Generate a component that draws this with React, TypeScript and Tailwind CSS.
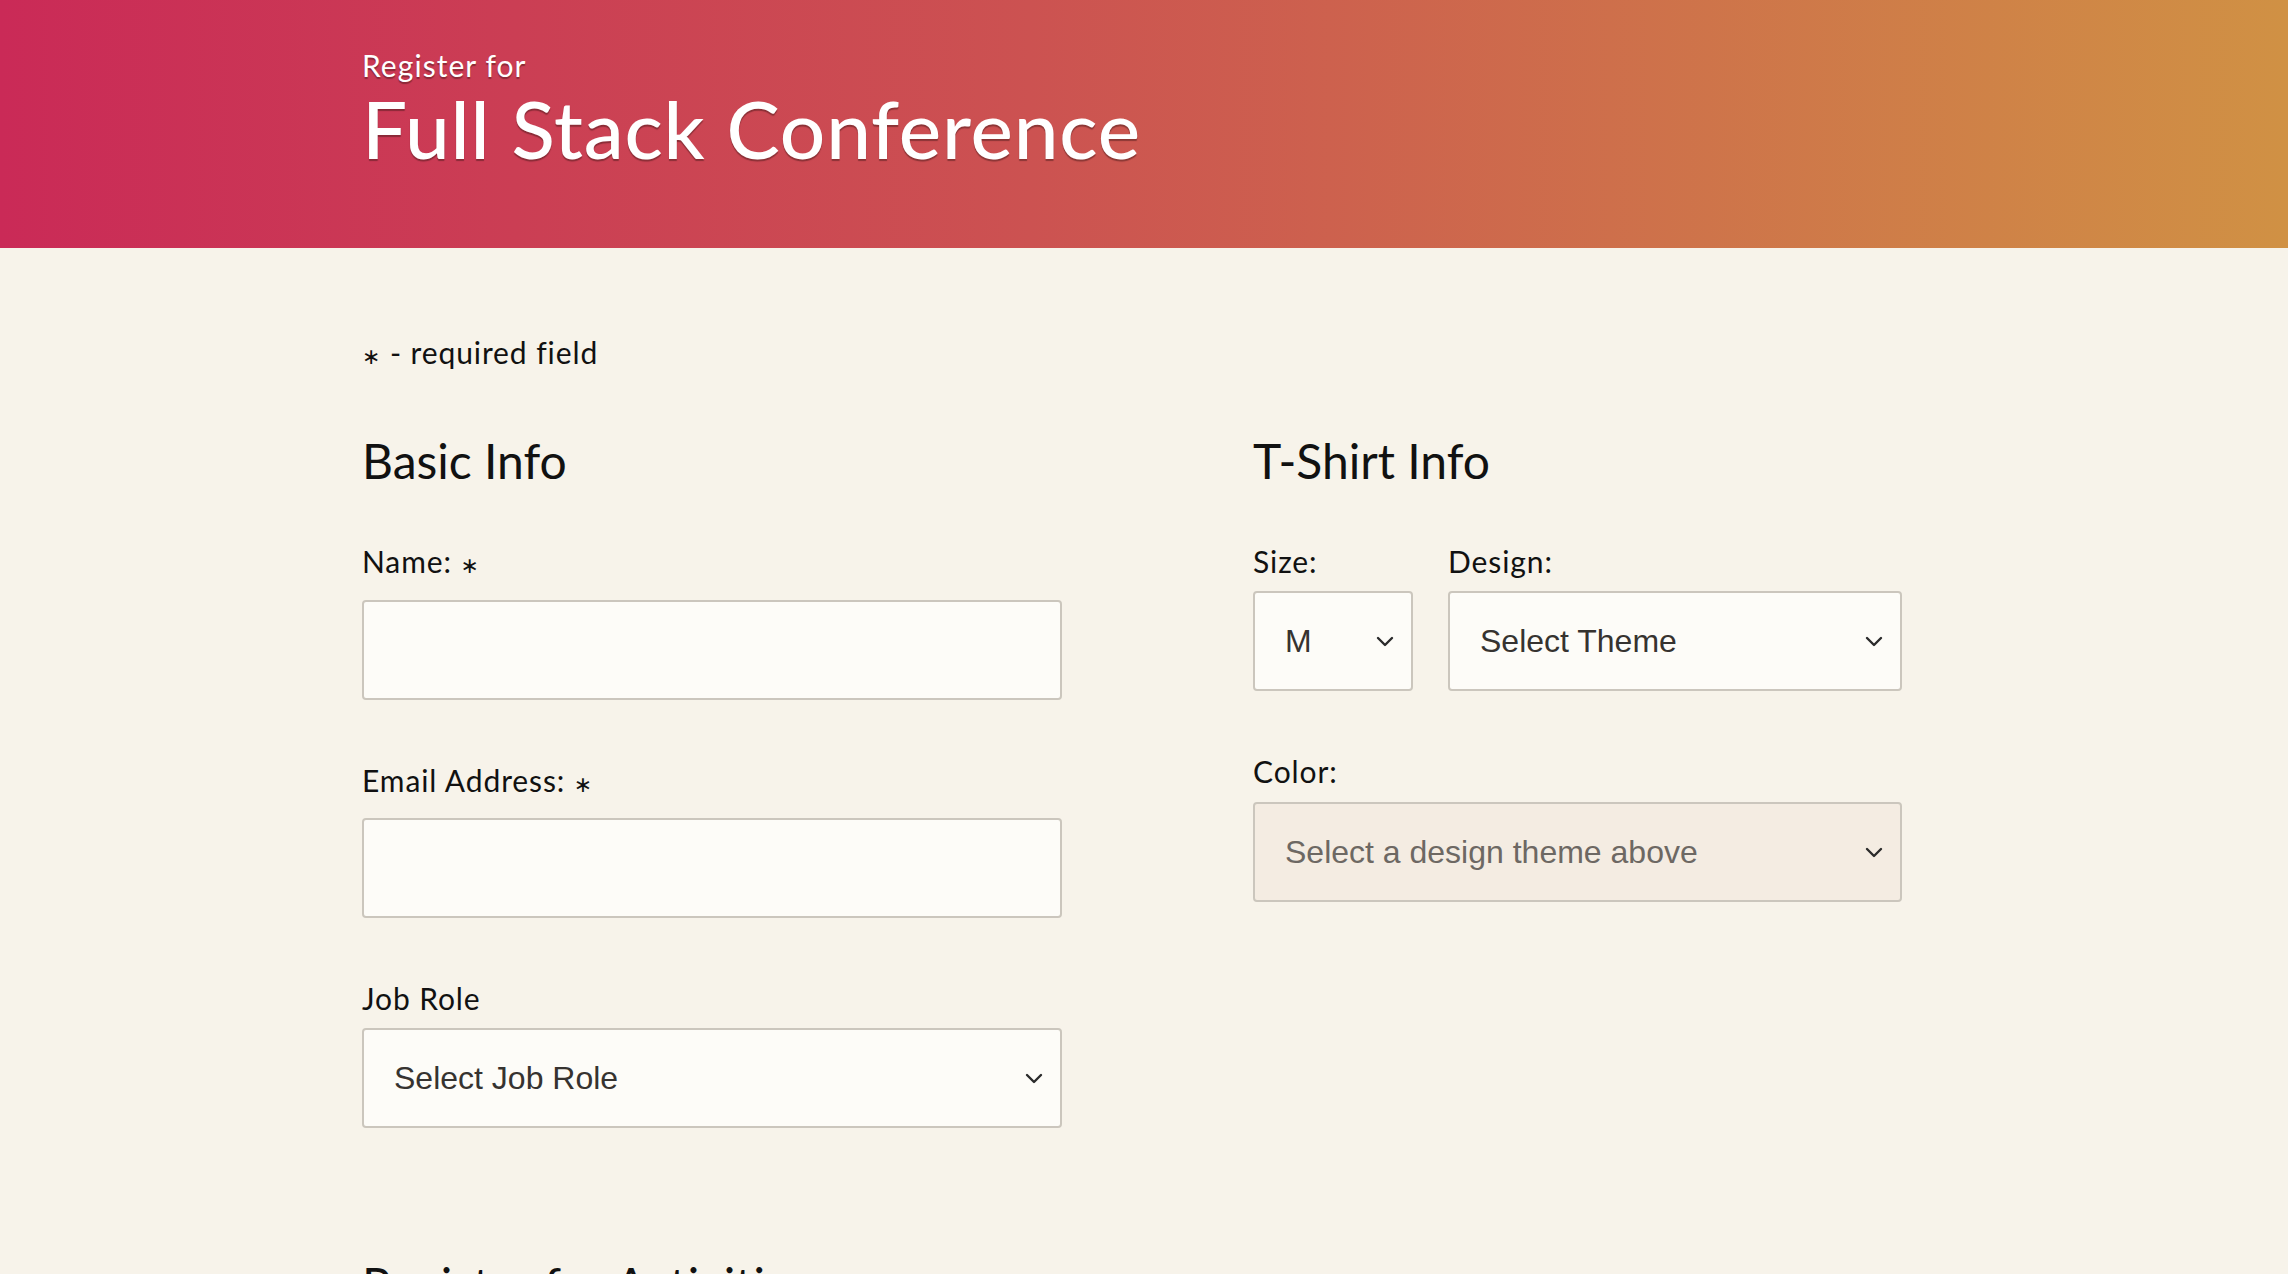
import React from 'react';

const body = "font-['Lato','Noto_Sans',sans-serif]";
const sys = "font-['Liberation_Sans','Arial',sans-serif]";

function Chevron() {
  return (
    <svg
      className="pointer-events-none absolute right-[18px] top-1/2 -translate-y-1/2"
      width="20"
      height="12"
      viewBox="0 0 20 12"
      fill="none"
    >
      <path d="M3 3l7 7 7-7" stroke="#2b2b2b" strokeWidth="2.4" strokeLinecap="round" strokeLinejoin="round" />
    </svg>
  );
}

function Select({
  value,
  options,
  className = '',
  disabled = false,
}: {
  value: string;
  options: string[];
  className?: string;
  disabled?: boolean;
}) {
  return (
    <div className={`relative ${className}`}>
      <select
        defaultValue={value}
        disabled={disabled}
        className={`${sys} h-[100px] w-full appearance-none rounded-[4px] border-2 border-[#cbc6bd] pl-[30px] pr-[50px] text-[32px] outline-none ${
          disabled ? 'bg-[#f4ece2] text-[#6d6863]' : 'bg-[#fdfcf8] text-[#363330]'
        }`}
      >
        {options.map(o => (
          <option key={o}>{o}</option>
        ))}
      </select>
      <Chevron />
    </div>
  );
}

const star = <span className="font-['DejaVu_Sans'] text-[22px]">∗</span>;
const label = 'block text-[30px] leading-[36px] tracking-[0.03em]';

export default function App() {
  return (
    <div className={`min-h-screen bg-[#f7f3ea] ${body} text-[#111]`}>
      <header className="h-[248px] bg-[linear-gradient(90deg,#ca2a57_0%,#cc5251_45%,#d09144_100%)]">
        <div className="mx-auto w-[1564px] pt-[46px] text-white [text-shadow:0_2px_1px_rgba(60,20,20,0.45)]">
          <div className="text-[30px] leading-[38px] tracking-[0.035em]">Register for</div>
          <h1 className="text-[80px] leading-[88px] font-medium tracking-[0.01em]">Full Stack Conference</h1>
        </div>
      </header>

      <main className="mx-auto w-[1564px] pt-[86px]">
        <p className="text-[30px] leading-[36px] tracking-[0.03em]">{star} - required field</p>

        <div className="mt-[57px] flex gap-[191px]">
          <section className="w-[700px]">
            <h2 className="text-[48px] leading-[58px]">Basic Info</h2>

            <label className={`mt-[53px] ${label}`}>Name: {star}</label>
            <input className="mt-[16px] block h-[100px] w-full rounded-[4px] border-2 border-[#cbc6bd] bg-[#fdfcf8] px-[30px] text-[32px] outline-none" />

            <label className={`mt-[62px] ${label}`}>Email Address: {star}</label>
            <input className="mt-[15px] block h-[100px] w-full rounded-[4px] border-2 border-[#cbc6bd] bg-[#fdfcf8] px-[30px] text-[32px] outline-none" />

            <label className={`mt-[62px] ${label}`}>Job Role</label>
            <Select className="mt-[12px]" value="Select Job Role" options={['Select Job Role', 'Full Stack JavaScript Developer', 'Front End Developer', 'Back End Developer', 'Designer', 'Student', 'Other']} />

            <h2 className="mt-[128px] text-[48px] leading-[58px]">Register for Activities</h2>
          </section>

          <section className="w-[649px]">
            <h2 className="text-[48px] leading-[58px]">T-Shirt Info</h2>

            <div className="mt-[53px] flex gap-[35px]">
              <div className="w-[160px]">
                <label className={label}>Size:</label>
                <Select className="mt-[12px]" value="M" options={['S', 'M', 'L', 'XL']} />
              </div>
              <div className="w-[454px]">
                <label className={label}>Design:</label>
                <Select className="mt-[12px]" value="Select Theme" options={['Select Theme', 'Theme - JS Puns', 'Theme - I ♥ JS']} />
              </div>
            </div>

            <label className={`mt-[62px] ${label}`}>Color:</label>
            <Select className="mt-[13px]" value="Select a design theme above" options={['Select a design theme above']} disabled />
          </section>
        </div>
      </main>
    </div>
  );
}
